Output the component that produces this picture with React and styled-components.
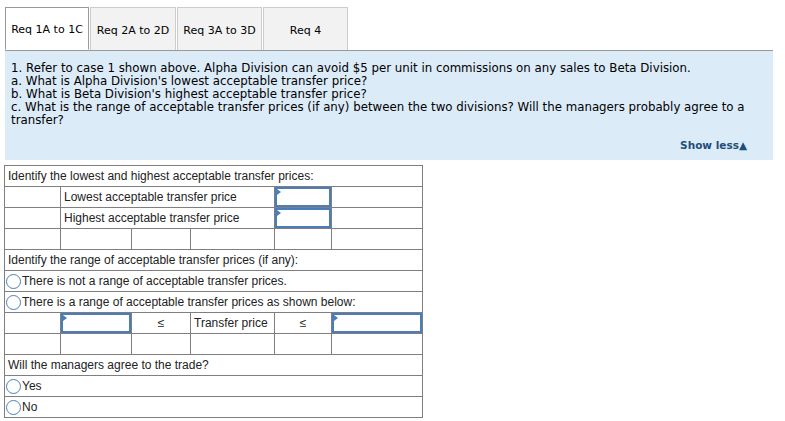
import React from 'react';
import styled, { createGlobalStyle } from 'styled-components';

const GlobalStyle = createGlobalStyle`
  body {
    margin: 0;
    background: #ffffff;
  }
`;

const Page = styled.div`
  padding: 7px 12px 0 5px;
`;

const TabBar = styled.div`
  display: flex;
  gap: 1px;
  border-bottom: 1px solid #999999;
  width: 768px;
`;

const Tab = styled.div`
  width: ${(p) => p.$w}px;
  height: 43px;
  box-sizing: border-box;
  display: flex;
  align-items: center;
  justify-content: center;
  font-family: 'DejaVu Sans', Verdana, sans-serif;
  font-size: 11px;
  color: #000000;
  background: ${(p) => (p.$active ? '#ffffff' : '#f2f2f2')};
  border: 1px solid ${(p) => (p.$active ? '#999999' : '#cccccc')};
  border-bottom: ${(p) => (p.$active ? '1px solid #ffffff' : 'none')};
  margin-bottom: ${(p) => (p.$active ? '-1px' : '0')};
  padding-top: 2px;
`;

const Panel = styled.div`
  width: 768px;
  box-sizing: border-box;
  background: #dcebf8;
  padding: 11px 26px 8px 6px;
  font-family: 'DejaVu Sans', Verdana, sans-serif;
  font-size: 11.8px;
  line-height: 13px;
  color: #000000;
`;

const Line = styled.div``;

const ShowLess = styled.div`
  text-align: right;
  margin-top: 12px;
  font-size: 10.5px;
  font-weight: bold;
  color: #1e4e79;
`;

const Table = styled.table`
  margin: 5px 0 0 -1px;
  border-collapse: collapse;
  table-layout: fixed;
  width: 419px;
  font-family: 'Liberation Sans', Arial, sans-serif;
  font-size: 12px;
  color: #222222;
`;

const Cell = styled.td`
  border: 1px solid #7f7f7f;
  height: 20px;
  padding: 0 ${(p) => (p.$flush ? 0 : 3)}px;
  text-align: ${(p) => p.$align || 'left'};
  vertical-align: middle;
  white-space: nowrap;
`;

const InputCell = styled.td`
  border: 1px solid #7f7f7f;
  padding: 0;
  height: 20px;
`;

const InputBox = styled.div`
  position: relative;
  height: 20px;
  box-sizing: border-box;
  border: 2px solid #4a7ebb;
  background: #ffffff;

  &::before {
    content: '';
    position: absolute;
    left: 0;
    top: 0;
    border-top: 3px solid transparent;
    border-bottom: 3px solid transparent;
    border-left: 4px solid #4a7ebb;
  }
`;

const RadioLabel = styled.label`
  display: flex;
  align-items: center;
`;

const RadioCircle = styled.span`
  width: 15px;
  height: 15px;
  margin-left: 1px;
  border-radius: 50%;
  border: 1px solid #4a7ebb;
  background: #ffffff;
  box-sizing: border-box;
  margin-right: 1px;
`;

const Radio = ({ children }) => (
  <RadioLabel>
    <RadioCircle />
    {children}
  </RadioLabel>
);

const EmptyRow = () => (
  <tr>
    <Cell />
    <Cell />
    <Cell />
    <Cell />
    <Cell />
    <Cell />
  </tr>
);

const tabs = [
  { label: 'Req 1A to 1C', w: 84 },
  { label: 'Req 2A to 2D', w: 86 },
  { label: 'Req 3A to 3D', w: 85 },
  { label: 'Req 4', w: 85 },
];

export default function App() {
  return (
    <Page>
      <GlobalStyle />
      <TabBar>
        {tabs.map((t, i) => (
          <Tab key={t.label} $w={t.w} $active={i === 0}>
            {t.label}
          </Tab>
        ))}
      </TabBar>
      <Panel>
        <Line>1. Refer to case 1 shown above. Alpha Division can avoid $5 per unit in commissions on any sales to Beta Division.</Line>
        <Line>a. What is Alpha Division's lowest acceptable transfer price?</Line>
        <Line>b. What is Beta Division's highest acceptable transfer price?</Line>
        <Line>c. What is the range of acceptable transfer prices (if any) between the two divisions? Will the managers probably agree to a transfer?</Line>
        <ShowLess>Show less▲</ShowLess>
      </Panel>

      <Table>
        <colgroup>
          <col style={{ width: 56 }} />
          <col style={{ width: 71 }} />
          <col style={{ width: 59 }} />
          <col style={{ width: 84 }} />
          <col style={{ width: 57 }} />
          <col style={{ width: 91 }} />
        </colgroup>
        <tbody>
          <tr>
            <Cell colSpan={6}>Identify the lowest and highest acceptable transfer prices:</Cell>
          </tr>
          <tr>
            <Cell />
            <Cell colSpan={3}>Lowest acceptable transfer price</Cell>
            <InputCell>
              <InputBox />
            </InputCell>
            <Cell />
          </tr>
          <tr>
            <Cell />
            <Cell colSpan={3}>Highest acceptable transfer price</Cell>
            <InputCell>
              <InputBox />
            </InputCell>
            <Cell />
          </tr>
          <EmptyRow />
          <tr>
            <Cell colSpan={6}>Identify the range of acceptable transfer prices (if any):</Cell>
          </tr>
          <tr>
            <Cell colSpan={6} $flush>
              <Radio>There is not a range of acceptable transfer prices.</Radio>
            </Cell>
          </tr>
          <tr>
            <Cell colSpan={6} $flush>
              <Radio>There is a range of acceptable transfer prices as shown below:</Radio>
            </Cell>
          </tr>
          <tr>
            <Cell />
            <InputCell>
              <InputBox />
            </InputCell>
            <Cell $align="center">≤</Cell>
            <Cell>Transfer price</Cell>
            <Cell $align="center">≤</Cell>
            <InputCell>
              <InputBox />
            </InputCell>
          </tr>
          <EmptyRow />
          <tr>
            <Cell colSpan={6}>Will the managers agree to the trade?</Cell>
          </tr>
          <tr>
            <Cell colSpan={6} $flush>
              <Radio>Yes</Radio>
            </Cell>
          </tr>
          <tr>
            <Cell colSpan={6} $flush>
              <Radio>No</Radio>
            </Cell>
          </tr>
        </tbody>
      </Table>
    </Page>
  );
}
